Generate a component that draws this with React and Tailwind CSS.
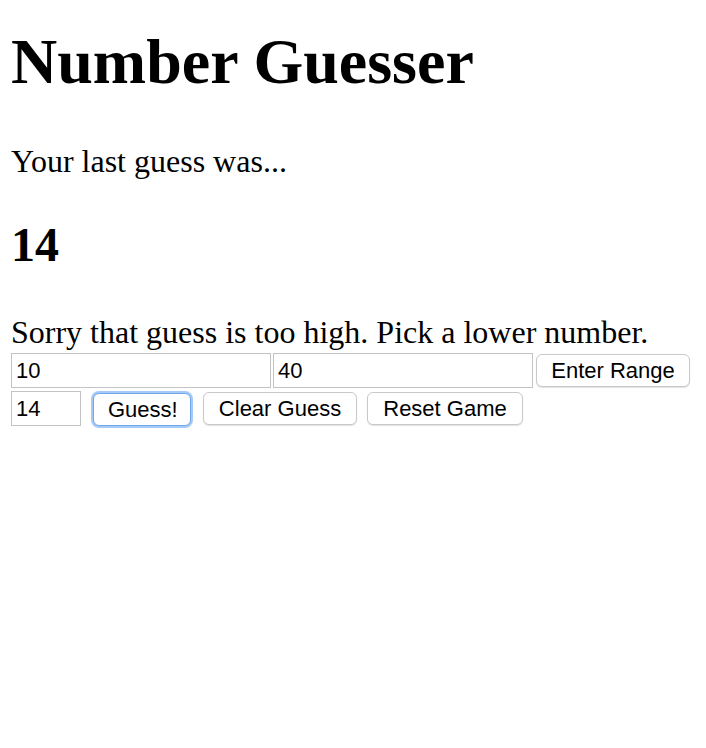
import React from "react";

export default function App() {
  const inputCls =
    "h-[35px] border border-[#c3c3c3] bg-white px-[4px] text-[22px] leading-none text-black outline-none [font-family:'Liberation_Sans',Arial,sans-serif]";
  const btnBase =
    "h-[33px] rounded-[6px] border bg-white px-[14px] text-[22px] leading-none text-black [font-family:'Liberation_Sans',Arial,sans-serif]";
  const btnCls = `${btnBase} border-[#c9c9c9] shadow-[0_1px_1px_rgba(0,0,0,0.12)]`;
  const focusCls = `${btnBase} border-[#6fa6ec] shadow-[0_0_0_2px_#a6c9f5]`;
  return (
    <div className="flex min-h-[748px] flex-col bg-white pl-[11px] text-black [font-family:'Liberation_Serif','Times_New_Roman',serif]">
      <h1 className="mt-[30px] text-[64px] font-bold leading-[64px]">Number Guesser</h1>
      <p className="mt-[51px] text-[32px] leading-[32px]">Your last guess was...</p>
      <h2 className="mt-[44px] text-[48px] font-bold leading-[48px]">14</h2>
      <p className="mt-[47px] text-[32px] leading-[32px]">
        Sorry that guess is too high. Pick a lower number.
      </p>
      <div className="mt-[5px] flex items-start">
        <input className={`${inputCls} w-[260px]`} defaultValue="10" />
        <input className={`${inputCls} ml-[2px] w-[260px]`} defaultValue="40" />
        <button className={`${btnCls} ml-[3px] mt-[1px] w-[154px]`}>Enter Range</button>
      </div>
      <div className="mt-[3px] flex items-start">
        <input className={`${inputCls} w-[70px]`} defaultValue="14" />
        <button className={`${focusCls} ml-[12px] mt-[2px] w-[98px]`}>Guess!</button>
        <button className={`${btnCls} ml-[12px] mt-[1px] w-[154px]`}>Clear Guess</button>
        <button className={`${btnCls} ml-[10px] mt-[1px] w-[156px]`}>Reset Game</button>
      </div>
    </div>
  );
}
